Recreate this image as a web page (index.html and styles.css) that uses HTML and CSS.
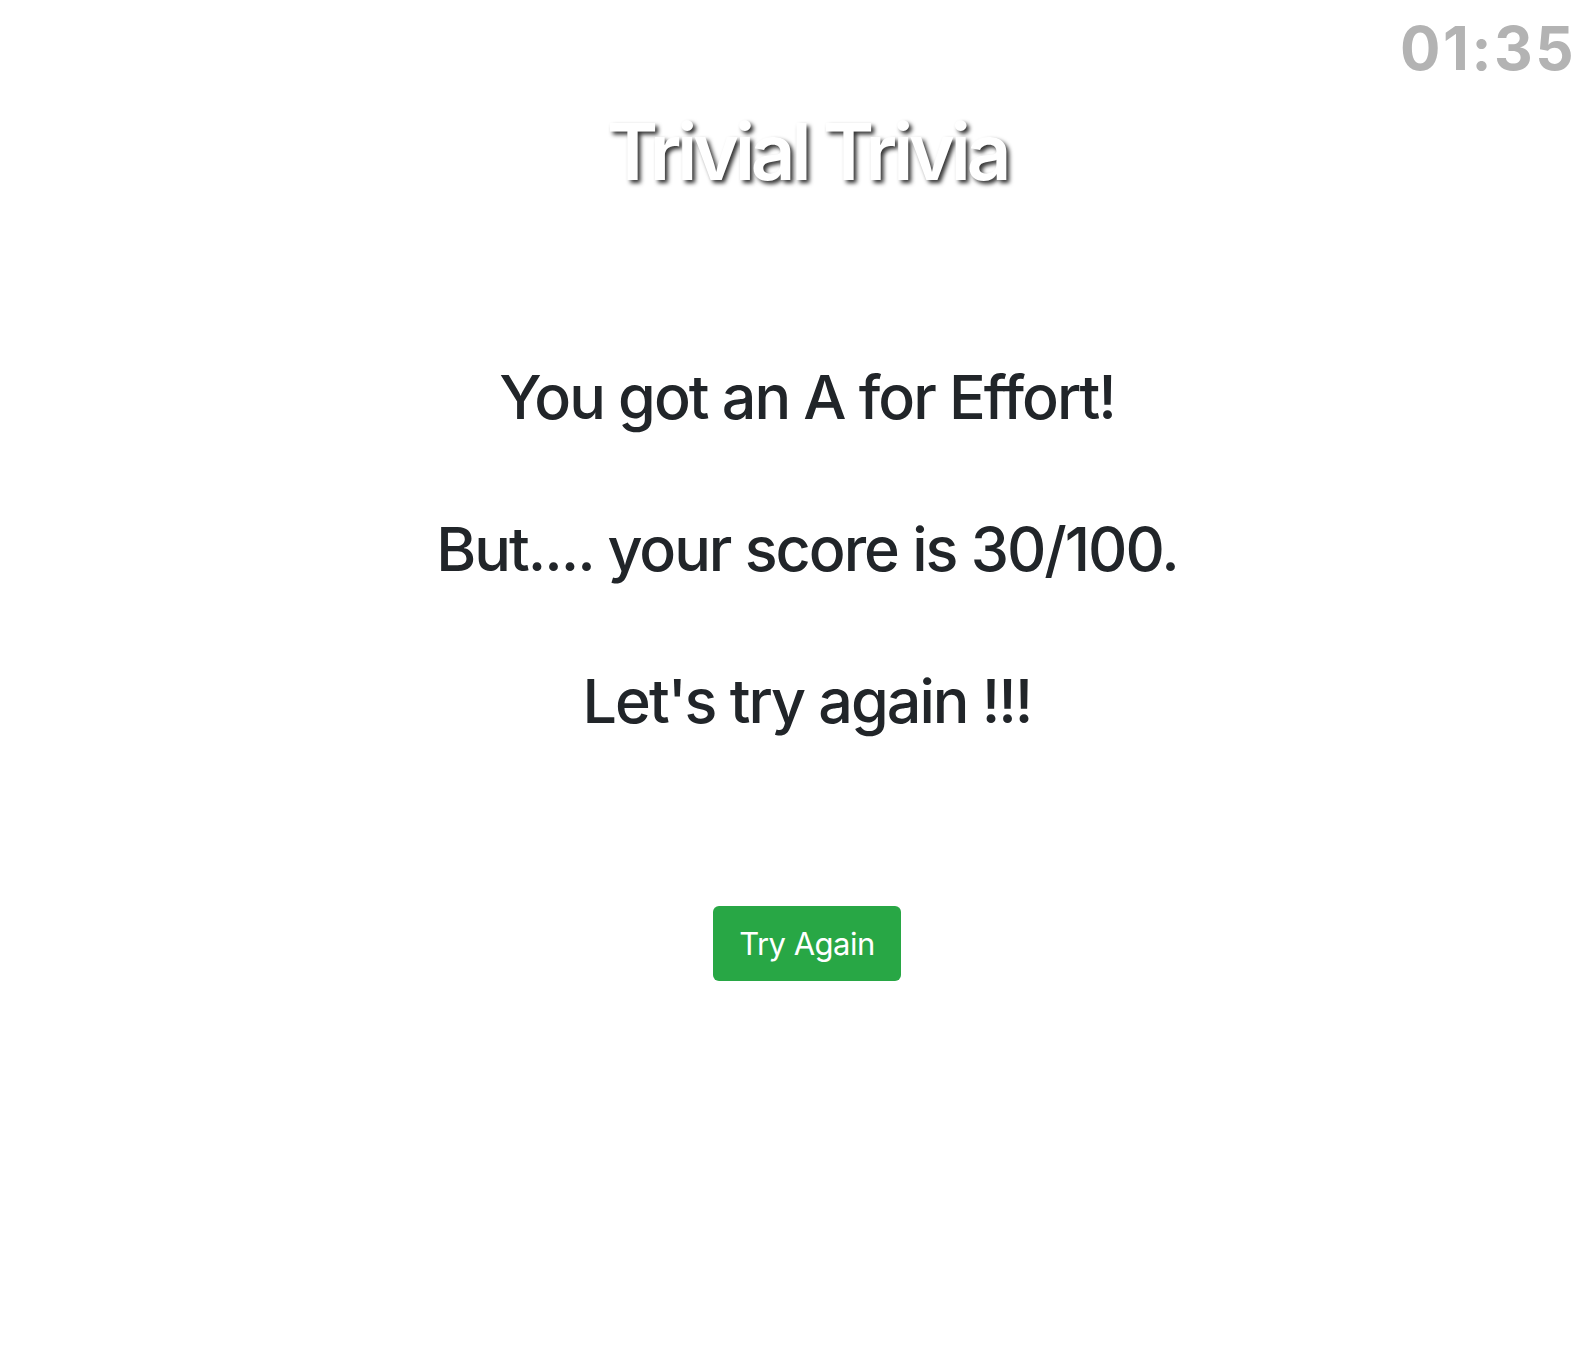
FILE: index.html
```html
<!DOCTYPE html>
<html>
<head>
<meta charset="utf-8">
<link rel="stylesheet" href="styles.css">
</head>
<body>
<div class="page">
  <div class="timer-row"><span class="timer">01:35</span></div>
  <div class="content">
    <h1 class="title">Trivial Trivia</h1>
    <div class="result">
      <p class="line">You got an A for Effort!</p>
      <p class="line">But.... your score is 30/100.</p>
      <p class="line">Let's try again !!!</p>
    </div>
    <div class="actions"><button class="btn-success">Try Again</button></div>
  </div>
</div>
</body>
</html>
```

FILE: styles.css
```css
html, body { margin: 0; padding: 0; background: #fff; }
body { font-family: Inter, "Noto Sans", sans-serif; color: #212529; }
.page { width: 1592px; }
.timer-row { display: flex; justify-content: flex-end; padding: 18px 16px 0 0; }
.timer { font-size: 60px; font-weight: 700; color: #b3b3b3; line-height: 1; letter-spacing: 2.5px; }
.content { padding-left: 22px; }
.title { margin: 27px 0 0; text-align: center; font-size: 78px; font-weight: 600; color: #fff; line-height: 1.2; letter-spacing: -4.3px; text-shadow: 3px 3px 4px rgba(0,0,0,0.8); }
.result { margin-top: 162px; text-align: center; }
.line { margin: 0 0 79px; font-size: 61px; font-weight: 500; line-height: 1.2; letter-spacing: -2px; }
.actions { display: flex; justify-content: center; margin-top: 168px; }
.btn-success { background: #28a745; color: #fff; border: none; border-radius: 6px; font-family: inherit; font-size: 31px; padding: 17px 26px; line-height: 1.33; letter-spacing: -0.5px; }
```
